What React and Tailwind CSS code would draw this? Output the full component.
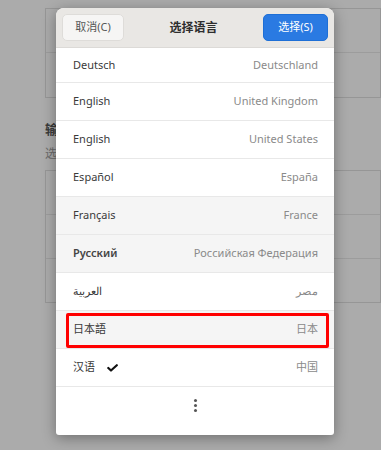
import React from 'react';

const rows = [
  { name: 'Deutsch', region: 'Deutschland' },
  { name: 'English', region: 'United Kingdom' },
  { name: 'English', region: 'United States' },
  { name: 'Español', region: 'España' },
  { name: 'Français', region: 'France', shaded: true },
  { name: 'Русский', region: 'Российская Федерация', shaded: true },
  { name: 'العربية', region: 'مصر' },
  { name: '日本語', region: '日本', shaded: true, marked: true },
  { name: '汉语', region: '中国', checked: true },
];

export default function App() {
  return (
    <div
      className="relative w-[381px] h-[450px] overflow-hidden bg-[#ababab]"
      style={{ fontFamily: '"Noto Sans", "Noto Sans CJK SC", sans-serif' }}
    >
      {/* Dimmed page behind the dialog */}
      <div className="pl-[45px] pt-[8px]">
        <div className="h-[90px] border border-[#969696] flex flex-col">
          <div className="h-[44px] border-b border-[#9c9c9c]" />
        </div>
        <div className="mt-[22px] text-[13px] font-bold text-[#3a3a3a] leading-[18px]">输</div>
        <div className="mt-[8px] text-[12px] text-[#6a6a6a] leading-[16px]">选</div>
        <div className="mt-[8px] h-[133px] border border-[#969696] flex flex-col">
          <div className="h-[44px] border-b border-[#9c9c9c] flex items-center pl-[9px] text-[#555] text-[12px]">⋮</div>
          <div className="h-[44px] border-b border-[#9c9c9c] flex items-center pl-[9px] text-[#555] text-[12px]">⋮</div>
        </div>
      </div>

      {/* Dialog */}
      <div className="absolute left-[56px] top-[8px] w-[278px] h-[427px] bg-white rounded-t-[8px] rounded-b-[3px] shadow-[0_3px_14px_rgba(0,0,0,0.35)] flex flex-col overflow-hidden">
        <div className="h-[40px] shrink-0 bg-[#e9e7e4] flex items-center justify-between px-[6px] border-b border-[#dcdad7]">
          <button className="w-[62px] h-[27px] rounded-[5px] bg-[#f6f5f4] border border-[#dedcd9] text-[11px] text-[#555]">
            取消(C)
          </button>
          <div className="text-[12px] font-bold text-[#2e2e2e]">选择语言</div>
          <button className="w-[65px] h-[27px] rounded-[5px] bg-[#2a7ae2] border border-[#1e6fd6] text-[11px] text-white">
            选择(S)
          </button>
        </div>

        {rows.map((r, i) => (
          <div
            key={i}
            className={`relative shrink-0 flex items-center justify-between pl-[17px] pr-[16px] border-b border-[#e8e8e8] text-[11px] ${
              i === 0 ? 'h-[35px]' : 'h-[38px]'
            } ${r.shaded ? 'bg-[#f5f5f5]' : 'bg-white'}`}
          >
            <div className="flex items-center text-[#3a3a3a]">
              <span className={r.name === 'Русский' ? 'font-semibold text-[#444]' : ''}>{r.name}</span>
              {r.checked && (
                <svg className="ml-[12px]" width="11" height="8" viewBox="0 0 11 8">
                  <path d="M1.3 4 L4 6.5 L9.8 1.2" fill="none" stroke="#111" strokeWidth="2.2" strokeLinecap="round" strokeLinejoin="round" />
                </svg>
              )}
            </div>
            <span className="text-[#8a8a8a]">{r.region}</span>
            {r.marked && (
              <div className="absolute left-[10px] right-[5px] top-[2px] bottom-[0px] border-[3px] border-[#ff0000] rounded-[2px]" />
            )}
          </div>
        ))}

        <div className="flex-1 flex justify-center pt-[12px]">
          <div className="flex flex-col gap-[2px]">
            <div className="w-[3px] h-[3px] rounded-full bg-[#555]" />
            <div className="w-[3px] h-[3px] rounded-full bg-[#555]" />
            <div className="w-[3px] h-[3px] rounded-full bg-[#555]" />
          </div>
        </div>
      </div>
    </div>
  );
}
